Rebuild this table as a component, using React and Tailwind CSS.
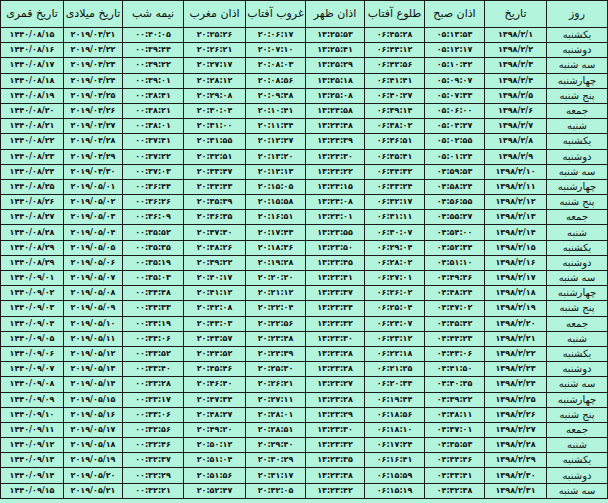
const COLS = [
  { title: 'روز', w: 'w-[61px]' },
  { title: 'تاریخ', w: 'w-[62px]' },
  { title: 'اذان صبح', w: 'w-[60px]' },
  { title: 'طلوع آفتاب', w: 'w-[60px]' },
  { title: 'اذان ظهر', w: 'w-[59px]' },
  { title: 'غروب آفتاب', w: 'w-[60px]' },
  { title: 'اذان مغرب', w: 'w-[62px]' },
  { title: 'نیمه شب', w: 'w-[61px]' },
  { title: 'تاریخ میلادی', w: 'w-[59px]' },
  { title: 'تاریخ قمری', w: 'w-[63px]' },
]

// day | jalali | fajr | sunrise | dhuhr | sunset | maghrib | midnight | gregorian | hijri (latin digits, converted below)
const RAW = `
یکشنبه|1398/2/1|05:13:53|06:45:28|13:25:53|20:06:17|20:25:26|00:40:05|2019/04/21|1440/08/15
دوشنبه|1398/2/2|05:12:17|06:44:12|13:25:41|20:07:10|20:26:21|00:39:44|2019/04/22|1440/08/16
سه شنبه|1398/2/3|05:10:42|06:42:56|13:25:29|20:08:03|20:27:17|00:39:22|2019/04/23|1440/08/17
چهارشنبه|1398/2/4|05:09:07|06:41:41|13:25:18|20:08:56|20:28:12|00:39:01|2019/04/24|1440/08/18
پنج شنبه|1398/2/5|05:07:33|06:40:27|13:25:08|20:09:48|20:29:08|00:38:41|2019/04/25|1440/08/19
جمعه|1398/2/6|05:06:00|06:39:14|13:24:58|20:10:41|20:30:04|00:38:21|2019/04/26|1440/08/20
شنبه|1398/2/7|05:04:27|06:38:02|13:24:48|20:11:34|20:31:00|00:38:01|2019/04/27|1440/08/21
یکشنبه|1398/2/8|05:02:55|06:36:51|13:24:39|20:12:27|20:31:55|00:37:41|2019/04/28|1440/08/22
دوشنبه|1398/2/9|05:01:24|06:35:41|13:24:30|20:13:20|20:32:51|00:37:22|2019/04/29|1440/08/23
سه شنبه|1398/2/10|04:59:53|06:34:32|13:24:22|20:14:13|20:33:47|00:37:03|2019/04/30|1440/08/24
چهارشنبه|1398/2/11|04:58:24|06:33:24|13:24:15|20:15:05|20:34:43|00:36:44|2019/05/01|1440/08/25
پنج شنبه|1398/2/12|04:56:55|06:32:17|13:24:08|20:15:58|20:35:39|00:36:26|2019/05/02|1440/08/26
جمعه|1398/2/13|04:55:27|06:31:11|13:24:01|20:16:51|20:36:35|00:36:09|2019/05/03|1440/08/27
شنبه|1398/2/14|04:54:00|06:30:07|13:23:55|20:17:43|20:37:30|00:35:52|2019/05/04|1440/08/28
یکشنبه|1398/2/15|04:52:34|06:29:04|13:23:50|20:18:36|20:38:26|00:35:35|2019/05/05|1440/08/29
دوشنبه|1398/2/16|04:51:10|06:28:02|13:23:45|20:19:28|20:39:22|00:35:19|2019/05/06|1440/08/29
سه شنبه|1398/2/17|04:49:46|06:27:01|13:23:41|20:20:20|20:40:17|00:35:03|2019/05/07|1440/09/01
چهارشنبه|1398/2/18|04:48:24|06:26:02|13:23:37|20:21:12|20:41:12|00:34:48|2019/05/08|1440/09/02
پنج شنبه|1398/2/19|04:47:02|06:25:04|13:23:34|20:22:04|20:42:08|00:34:33|2019/05/09|1440/09/03
جمعه|1398/2/20|04:45:42|06:24:07|13:23:32|20:22:56|20:43:03|00:34:19|2019/05/10|1440/09/04
شنبه|1398/2/21|04:44:23|06:23:12|13:23:30|20:23:48|20:43:57|00:34:06|2019/05/11|1440/09/05
یکشنبه|1398/2/22|04:43:06|06:22:18|13:23:28|20:24:39|20:44:52|00:33:52|2019/05/12|1440/09/06
دوشنبه|1398/2/23|04:41:50|06:21:25|13:23:28|20:25:30|20:45:46|00:33:40|2019/05/13|1440/09/07
سه شنبه|1398/2/24|04:40:35|06:20:34|13:23:27|20:26:21|20:46:40|00:33:28|2019/05/14|1440/09/08
چهارشنبه|1398/2/25|04:39:22|06:19:44|13:23:28|20:27:11|20:47:34|00:33:17|2019/05/15|1440/09/09
پنج شنبه|1398/2/26|04:38:11|06:18:56|13:23:29|20:28:01|20:48:27|00:33:06|2019/05/16|1440/09/10
جمعه|1398/2/27|04:37:01|06:18:10|13:23:30|20:28:51|20:49:20|00:32:56|2019/05/17|1440/09/11
شنبه|1398/2/28|04:35:53|06:17:24|13:23:32|20:29:40|20:50:12|00:32:46|2019/05/18|1440/09/12
یکشنبه|1398/2/29|04:34:46|06:16:41|13:23:35|20:30:29|20:51:04|00:32:37|2019/05/19|1440/09/13
دوشنبه|1398/2/30|04:33:41|06:15:59|13:23:38|20:31:17|20:51:56|00:32:29|2019/05/20|1440/09/14
سه شنبه|1398/2/31|04:32:38|06:15:19|13:23:42|20:32:05|20:52:47|00:32:21|2019/05/21|1440/09/15
`

const fa = (s) => s.replace(/[0-9]/g, (d) => '۰۱۲۳۴۵۶۷۸۹'[d])

const ROWS = RAW.trim().split('\n').map((line) => line.split('|').map(fa))

export default function App() {
  return (
    <div className="w-[608px] h-[503px] bg-[#b2f4dc] overflow-hidden" style={{ fontFamily: '"DejaVu Sans", sans-serif' }}>
      <div dir="rtl" className="flex flex-col w-[608px] border-t border-r border-[#1b1b1b]">
        <div className="flex">
          {COLS.map((c) => (
            <div key={c.title} className={`${c.w} h-[27px] shrink-0 border-l border-b border-[#1b1b1b] flex items-center justify-center text-[11px] text-[#111]`}>
              {c.title}
            </div>
          ))}
        </div>
        {ROWS.map((r, i) => (
          <div key={i} className="flex">
            {r.map((v, j) => (
              <div
                key={j}
                className={`${COLS[j].w} h-[15.2px] shrink-0 border-l border-b border-[#1b1b1b] flex items-center justify-center leading-none text-[#111] ${j === 0 ? 'text-[10px]' : 'text-[8px] font-bold'}`}
              >
                {v}
              </div>
            ))}
          </div>
        ))}
      </div>
    </div>
  )
}
